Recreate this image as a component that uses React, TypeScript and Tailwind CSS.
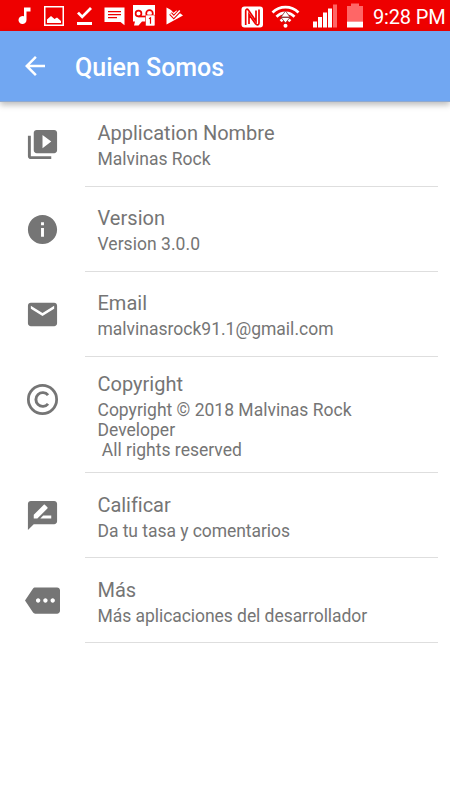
import React from "react";

type Row = { title: string; lines: string[]; icon: React.ReactNode; box: string; text: string };

const rows: Row[] = [
  {
    title: "Application Nombre",
    lines: ["Malvinas Rock"],
    box: "h-[85px]",
    text: "pt-[19px]",
    icon: <path d="M4 6H2v14c0 1.100.9 2 2 2h14v-2H4V6zm16-4H8c-1.100 0-2 .9-2 2v12c0 1.100.9 2 2 2h12c1.100 0 2-.9 2-2V4c0-1.100-.9-2-2-2zm-8 12.500v-9l6 4.500-6 4.500z" />,
  },
  {
    title: "Version",
    lines: ["Version 3.0.0"],
    box: "h-[85px]",
    text: "pt-[19px] tracking-[0.04px]",
    icon: <path d="M12 2C6.480 2 2 6.480 2 12s4.480 10 10 10 10-4.480 10-10S17.520 2 12 2zm1 15h-2v-6h2v6zm0-8h-2V7h2v2z" />,
  },
  {
    title: "Email",
    lines: ["malvinasrock91.1@gmail.com"],
    box: "h-[85px]",
    text: "pt-[19px]",
    icon: <path d="M20 4H4c-1.100 0-1.990.9-1.990 2L2 18c0 1.100.9 2 2 2h16c1.100 0 2-.9 2-2V6c0-1.100-.9-2-2-2zm0 4l-8 5-8-5V6l8 5 8-5v2z" />,
  },
  {
    title: "Copyright",
    lines: ["Copyright © 2018 Malvinas Rock", "Developer", " All rights reserved"],
    box: "h-[116px]",
    text: "pt-[15px]",
    icon: (
      <g fill="none" stroke="#757575">
        <circle cx="12" cy="12" r="9.700" strokeWidth="1.900" />
        <path d="M15.800 9A4.700 4.700 0 1 0 15.800 15" strokeWidth="2" />
      </g>
    ),
  },
  {
    title: "Calificar",
    lines: ["Da tu tasa y comentarios"],
    box: "h-[85px]",
    text: "pt-[20px] tracking-[-0.050px]",
    icon: <path d="M20 2H4c-1.100 0-1.990.9-1.990 2L2 22l4-4h14c1.100 0 2-.9 2-2V4c0-1.100-.9-2-2-2zM6 14v-2.470l6.880-6.880c.2-.2.510-.2.710 0l1.770 1.770c.2.2.2.510 0 .710L8.470 14H6zm12 0h-7.500l2-2H18v2z" />,
  },
  {
    title: "Más",
    lines: ["Más aplicaciones del desarrollador"],
    box: "h-[85px]",
    text: "pt-[20px] tracking-[-0.050px]",
    icon: <path d="M22 3H7c-.690 0-1.230.350-1.590.880L0 12l5.410 8.110c.360.530.970.890 1.660.890H22c1.100 0 2-.9 2-2V5c0-1.100-.9-2-2-2zM9 13.500c-.830 0-1.500-.670-1.500-1.500s.670-1.500 1.500-1.500 1.500.670 1.500 1.500-.670 1.500-1.500 1.500zm5 0c-.830 0-1.500-.670-1.500-1.500s.670-1.500 1.500-1.500 1.500.670 1.500 1.500-.670 1.500-1.500 1.500zm5 0c-.830 0-1.500-.670-1.500-1.500s.670-1.500 1.500-1.500 1.500.670 1.500 1.500-.670 1.500-1.500 1.500z" />,
  },
];

function StatusBar() {
  return (
    <div className="flex h-[31px] shrink-0 items-center bg-[#ee0000] text-white">
      <svg width="190" height="31" viewBox="0 0 190 31" fill="#fff">
        <path d="M24 7.500h6.500v4H26.500v8.500a4 4 0 1 1-2.500-3.700z" />
        <path fillRule="evenodd" d="M44 6h20v20H44zM45.500 7.500v17h17v-17z" />
        <path d="M47 23v-3.500l4-3.500 3.500 3 2.500-1.500 4 3.500v2z" />
        <path d="M77 13.500l2-1.800 3.200 3.200L90 7l2 2-9.800 9.800zM77 22h15v3H77z" />
        <path fillRule="evenodd" d="M104.500 7.500h20v17.800l-4-3.300h-16zM108 11v1.300h13V11zm0 3v1.300h13V14zm0 3v1.300h9V17z" />
        <path d="M133 5h22v11h-9v5.500h-4l-3.500 4h-4.500l1-4h-2z" />
        <g fill="none" stroke="#ee0000" strokeWidth="1.700">
          <circle cx="138.500" cy="13.500" r="2.900" />
          <circle cx="149.500" cy="13.500" r="3.300" />
          <path d="M138.500 16.500h7.500" />
        </g>
        <rect x="145.500" y="15" width="9.500" height="11" rx="1" stroke="#ee0000" strokeWidth="0.600" />
        <path d="M149 18.800l1.500-1v6" fill="none" stroke="#ee0000" strokeWidth="1.200" />
        <path d="M166.500 7.500l4.500 2.500 2.500 2.800 3-2.300 6.500 5-16.500 9z" />
        <path d="M170.500 13.500l3.300 3.500 6.700-7" fill="none" stroke="#ee0000" strokeWidth="3.600" />
        <path d="M170.500 13.500l3.300 3.500 6-6.500" fill="none" stroke="#fff" strokeWidth="1.500" />
      </svg>
      <svg className="ml-[50px]" width="130" height="31" viewBox="240 0 130 31" fill="#fff">
        <rect x="241.500" y="6.500" width="21.500" height="21" rx="3" />
        <path d="M245.700 25V11c0-2 1.500-2.500 2.800-.8l7.500 11V10.500M249 24V14.500l6.500 9.300c1.500 1.800 3.500 1.200 3.500-.8V9.500" fill="none" stroke="#ee0000" strokeWidth="1.700" />
        <path d="M272.500 12.500a18.500 18.500 0 0 1 26 0M276.500 16.800a12.500 12.500 0 0 1 18 0M280.500 21a7.500 7.500 0 0 1 10 0" fill="none" stroke="#fff" strokeWidth="2.700" />
        <path d="M281 17h9l-4.500-6zM281 17.500h9l-4.500 5.500z" stroke="#8c3030" strokeWidth="0.800" />
        <circle cx="285.500" cy="25.800" r="2" />
        <path d="M313 21.500h4v6h-4zM318 17h4v10.500h-4zM323 12.500h4v15h-4zM328 8.500h4v19h-4z" />
        <path d="M333 4.500h4v23h-4z" fill="#f66" />
        <path d="M347 6h4V3.500h8V6h4v15.500h-16z" fill="#f66" />
        <path d="M347 21.500h16v6h-16z" />
      </svg>
      <span className="ml-[3px] whitespace-nowrap pt-[3px] text-[20px] leading-[28px] tracking-[-0.150px]">9:28 PM</span>
    </div>
  );
}

export default function App() {
  return (
    <div className="flex h-[800px] w-[450px] flex-col overflow-hidden bg-white font-['Roboto',sans-serif] text-[#757575]">
      <StatusBar />
      <header className="z-10 flex h-[71px] shrink-0 items-center border-b border-[#8fa9cf] bg-[#71a7f2] pl-5 text-white shadow-[0_3px_6px_rgba(0,0,0,0.26)]">
        <svg width="30" height="30" viewBox="0 0 24 24" fill="#fff">
          <path d="M20 11H7.830l5.590-5.590L12 4l-8 8 8 8 1.410-1.410L7.830 13H20v-2z" />
        </svg>
        <h1 className="ml-[25px] pt-0.5 text-[25px] font-medium leading-none">Quien Somos</h1>
      </header>
      <main>
        {rows.map((row) => (
          <section key={row.title} className={`flex ${row.box}`}>
            <div className="w-[85px] shrink-0 pl-[25px] pt-[25px]">
              <svg width="35" height="35" viewBox="0 0 24 24" fill="#757575">{row.icon}</svg>
            </div>
            <div className={`mr-3 flex-1 border-b border-[#dedede] pl-[12.500px] ${row.text}`}>
              <h2 className="text-[20px] leading-6">{row.title}</h2>
              <div className="mt-1 text-[17.500px] leading-5">
                {row.lines.map((line) => (
                  <p key={line} className="whitespace-pre">{line}</p>
                ))}
              </div>
            </div>
          </section>
        ))}
      </main>
    </div>
  );
}
